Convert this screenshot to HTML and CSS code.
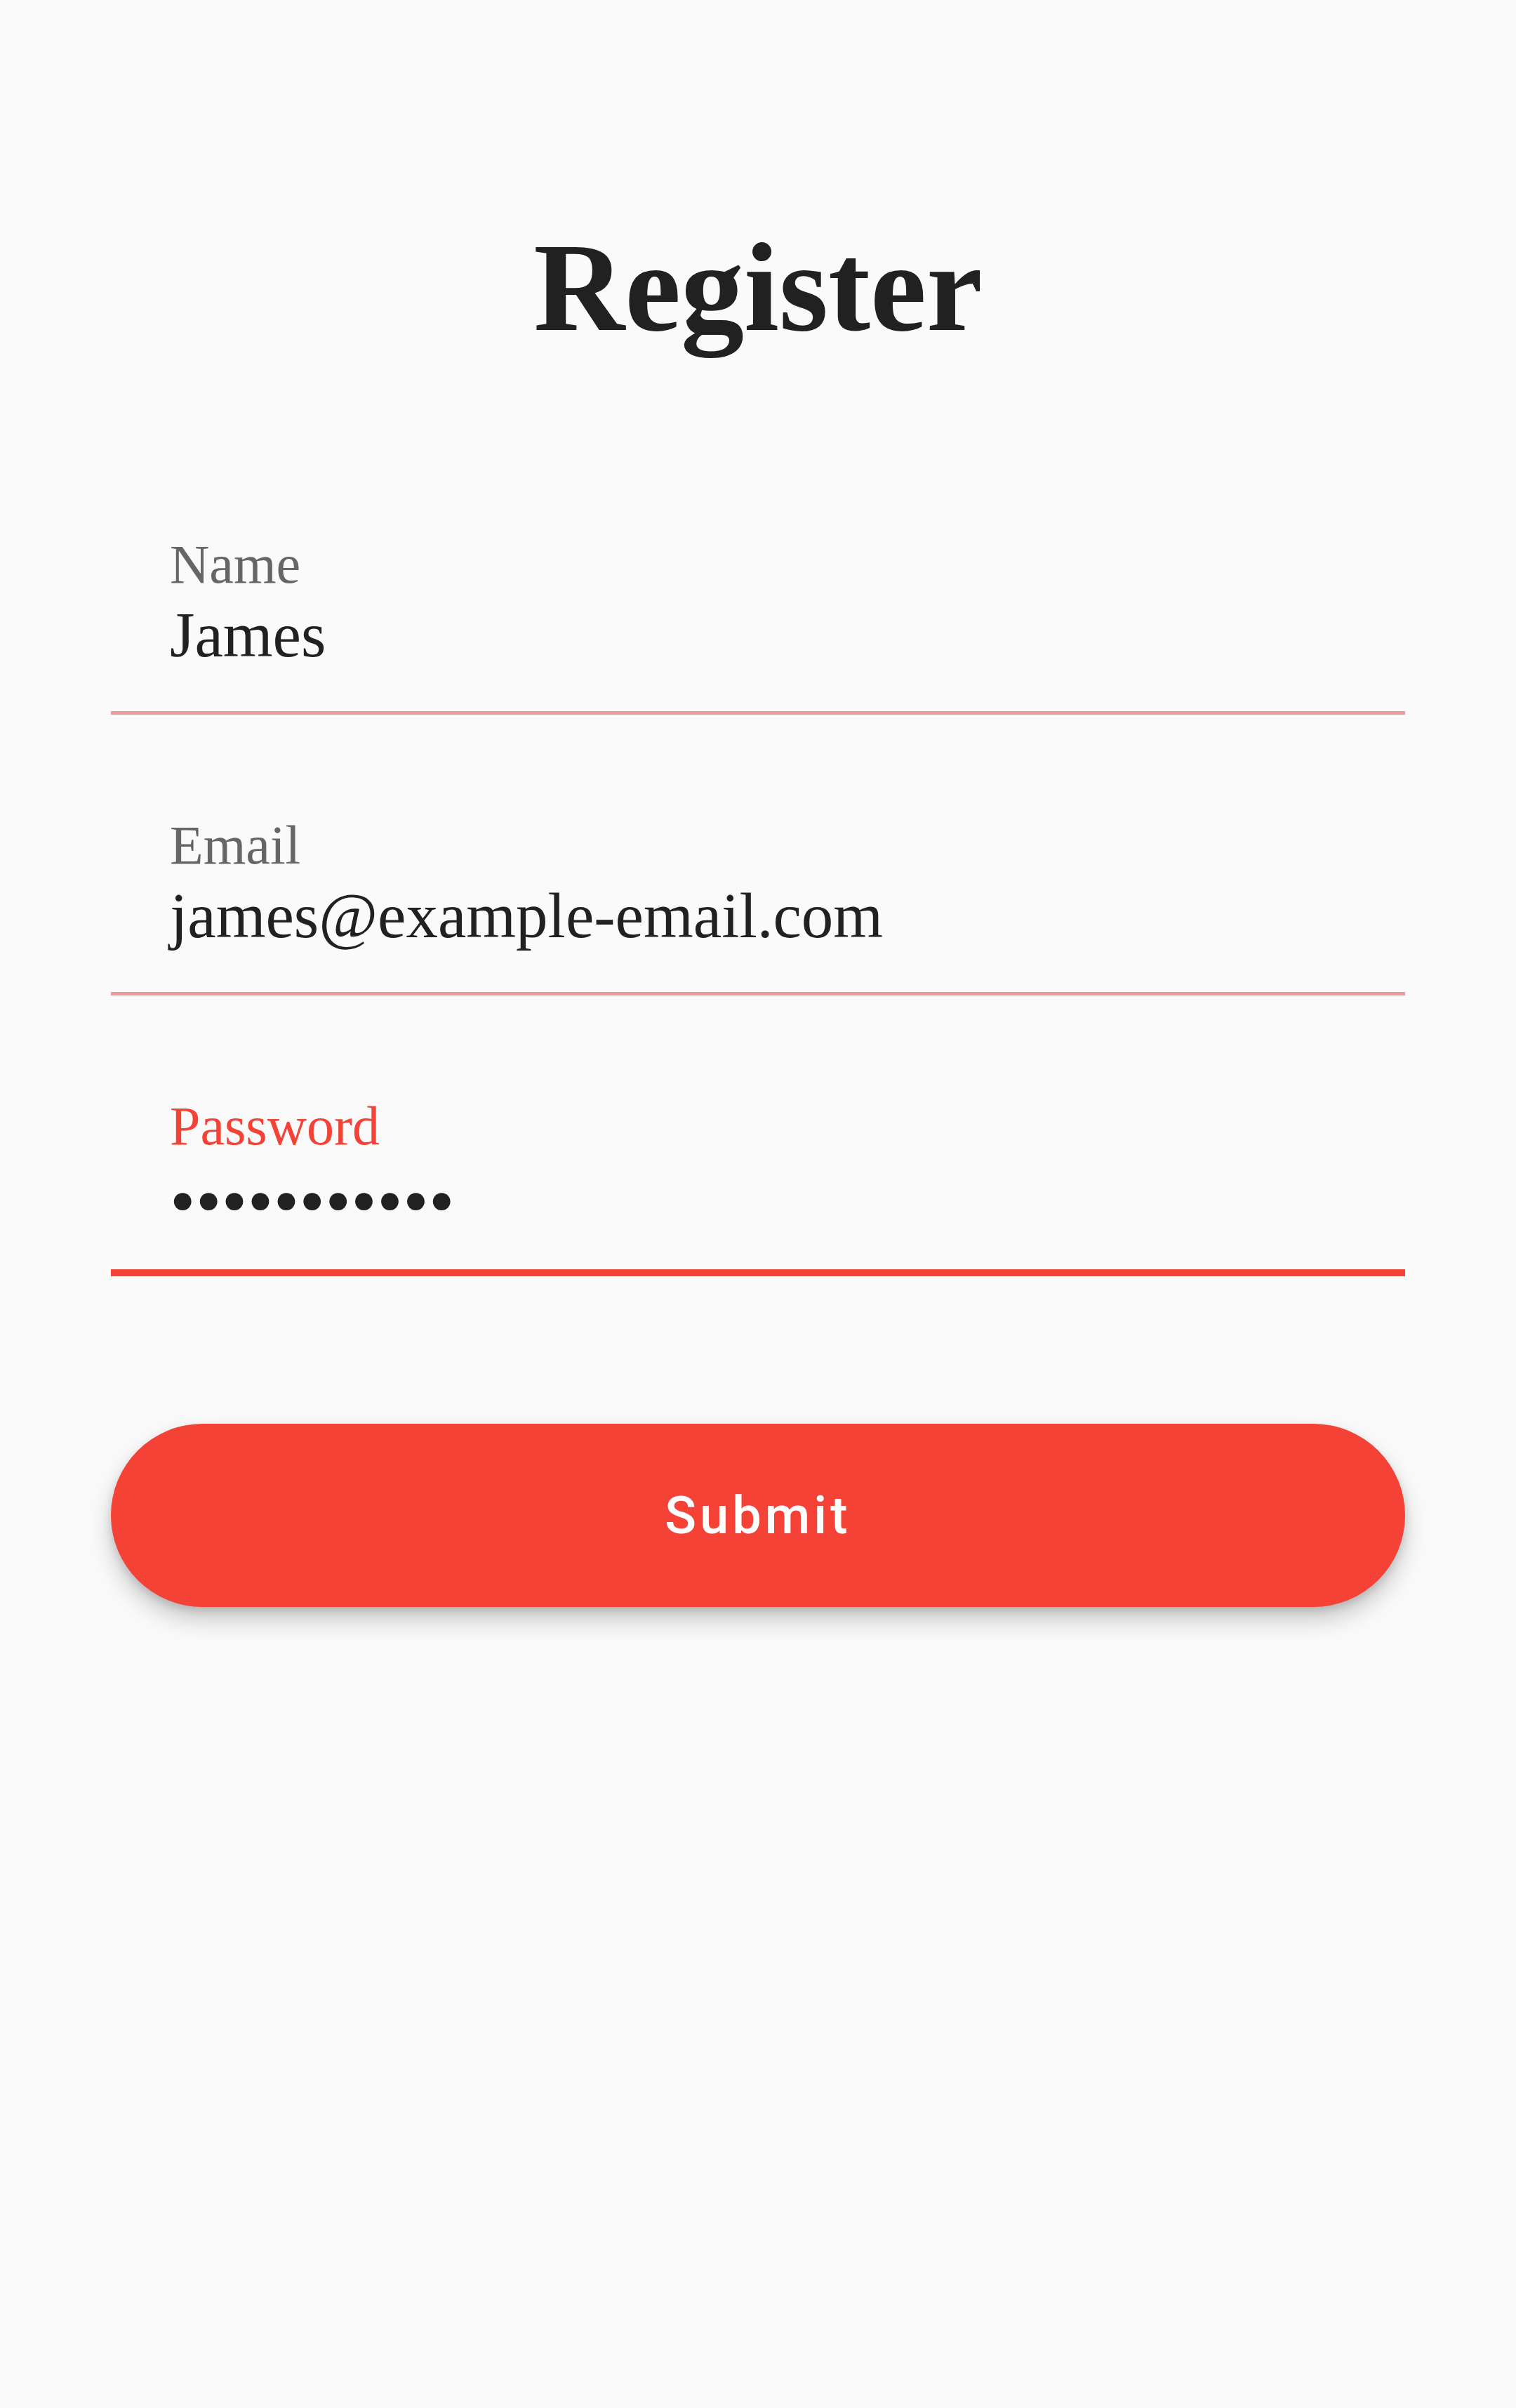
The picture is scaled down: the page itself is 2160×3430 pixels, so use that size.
FILE: index.html
```html
<!DOCTYPE html>
<html lang="en">
<head>
<meta charset="utf-8">
<title>Register</title>
<link rel="stylesheet" href="styles.css">
</head>
<body>
<main class="page">
  <h1 class="title">Register</h1>
  <form class="form">
    <div class="field">
      <label class="field-label">Name</label>
      <div class="field-value">James</div>
    </div>
    <div class="field">
      <label class="field-label">Email</label>
      <div class="field-value">james@example-email.com</div>
    </div>
    <div class="field field-focused">
      <label class="field-label">Password</label>
      <div class="field-value field-dots">•••••••••••</div>
    </div>
    <button type="button" class="submit">Submit</button>
  </form>
</main>
</body>
</html>
```

FILE: styles.css
```css
html, body {
  margin: 0;
  padding: 0;
  background: #fafafa;
}

.page {
  box-sizing: border-box;
  width: 2160px;
  min-height: 3430px;
  padding: 310px 158px 0;
  display: flex;
  flex-direction: column;
}

.title {
  margin: 0;
  font-family: "Liberation Serif", "Times New Roman", serif;
  font-weight: 700;
  font-size: 180px;
  line-height: 200px;
  color: #212121;
  text-align: center;
}

.form {
  margin-top: 107.7px;
  display: flex;
  flex-direction: column;
}

.field {
  box-sizing: border-box;
  height: 400px;
  padding: 136.6px 0 0 84px;
  display: flex;
  flex-direction: column;
  border-bottom: 5.3px solid #ef9a9a;
}

.field-label {
  font-family: "Liberation Serif", "Times New Roman", serif;
  font-size: 78px;
  line-height: 100px;
  color: #666666;
}

.field-value {
  font-family: "Liberation Serif", "Times New Roman", serif;
  font-size: 91px;
  line-height: 101px;
  color: #212121;
}

.field-focused {
  border-bottom: 10.5px solid #f44336;
}

.field-focused .field-label {
  color: #f44336;
}

.field-dots {
  font-size: 104px;
  letter-spacing: 0.5px;
  padding-top: 6px;
}

.submit {
  margin-top: 210.3px;
  height: 261px;
  border: none;
  border-radius: 131px;
  background: #f44336;
  color: #ffffff;
  font-family: Roboto, "Liberation Sans", sans-serif;
  font-weight: 500;
  font-size: 74px;
  letter-spacing: 5px;
  box-shadow: 0 18px 34px rgba(0, 0, 0, 0.2), 0 6px 12px rgba(0, 0, 0, 0.12);
  display: flex;
  align-items: center;
  justify-content: center;
  padding: 0;
}
```
